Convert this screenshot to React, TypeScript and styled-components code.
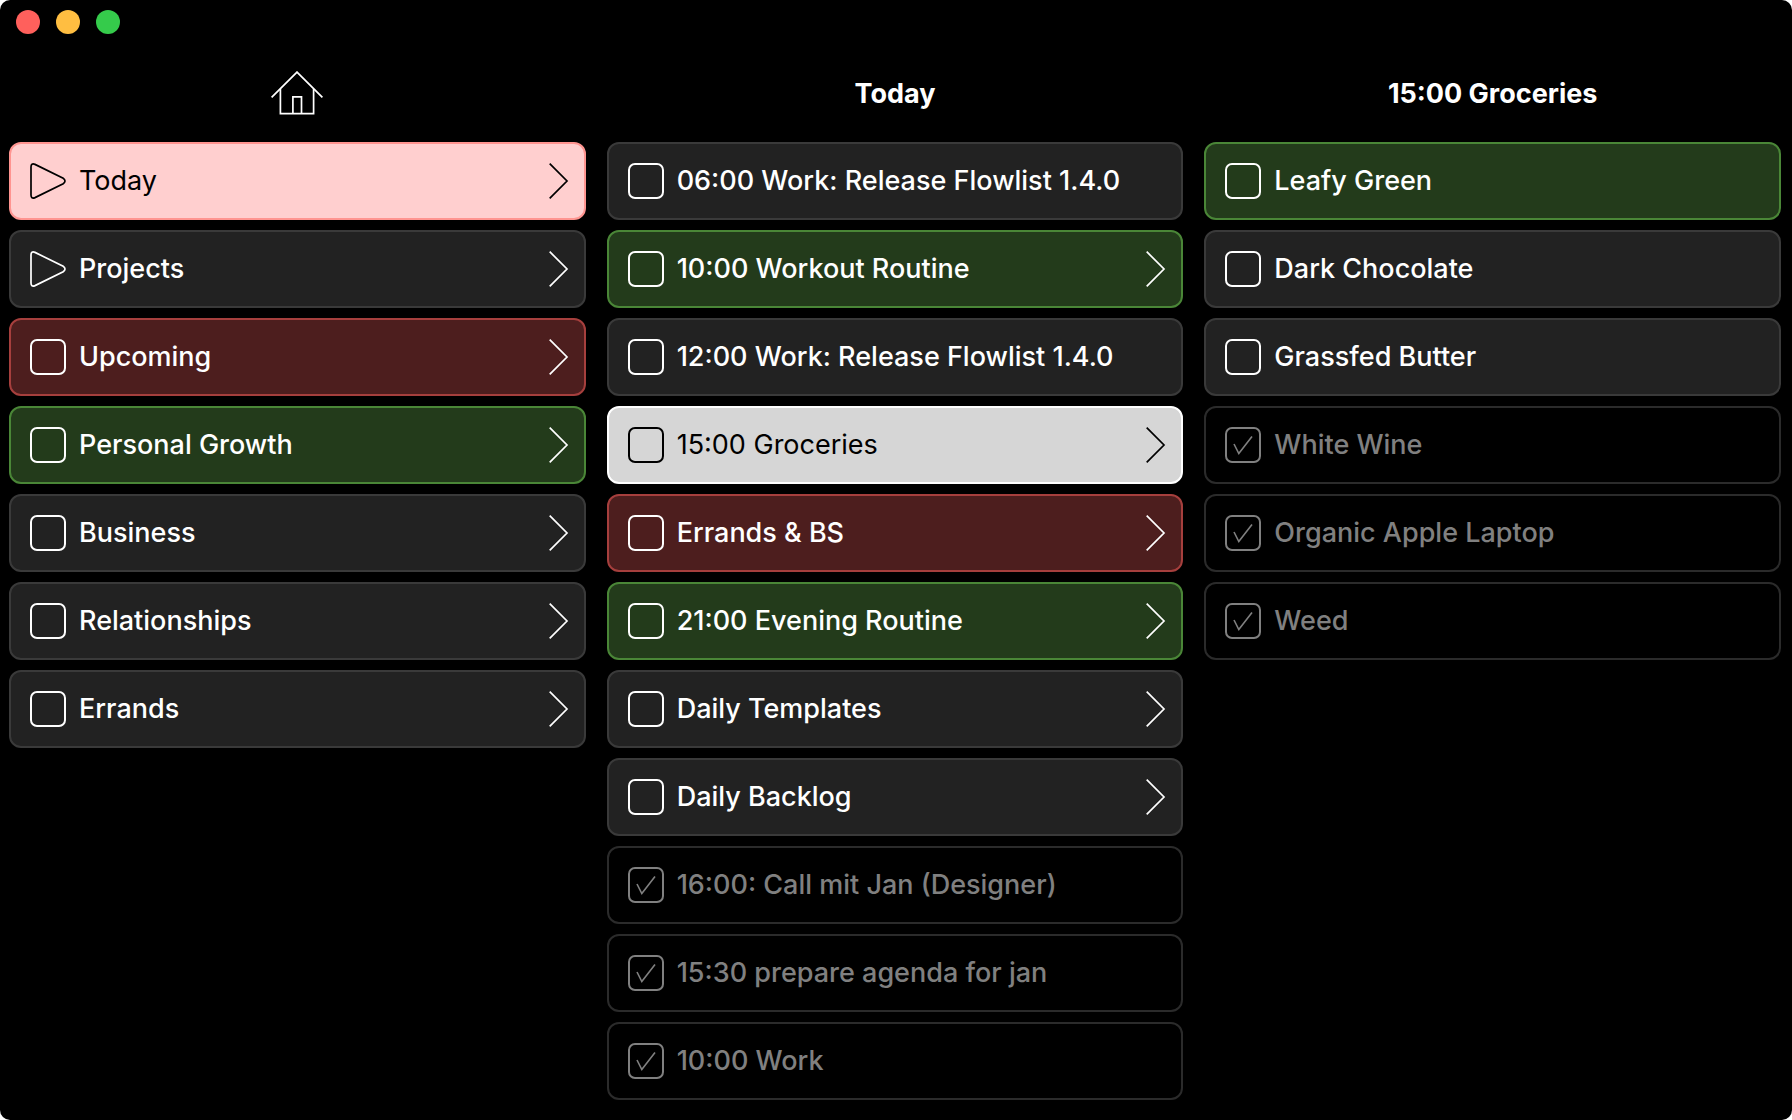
import React, { useId, useState } from "react";
import styled, { createGlobalStyle, css } from "styled-components";

type Tone = "plain" | "red" | "green" | "pinkActive" | "plainActive";

interface Item {
  title: string;
  tone?: Tone;
  flow?: boolean;
  open?: boolean;
  done?: boolean;
}

const tones: Record<Tone | "done", { bg: string; edge: string; ink: string; weight: number }> = {
  plain: { bg: "#222222", edge: "#3a3a3a", ink: "#ffffff", weight: 500 },
  red: { bg: "#4d1e1e", edge: "#a63f3d", ink: "#ffffff", weight: 500 },
  green: { bg: "#233b1b", edge: "#4a8637", ink: "#ffffff", weight: 500 },
  pinkActive: { bg: "#ffcfcf", edge: "#ff9490", ink: "#000000", weight: 400 },
  plainActive: { bg: "#d6d6d6", edge: "#ffffff", ink: "#000000", weight: 400 },
  done: { bg: "#000000", edge: "#2b2b2b", ink: "#808080", weight: 500 },
};

const home: Item[] = [
  { title: "Today", tone: "pinkActive", flow: true, open: true },
  { title: "Projects", flow: true, open: true },
  { title: "Upcoming", tone: "red", open: true },
  { title: "Personal Growth", tone: "green", open: true },
  { title: "Business", open: true },
  { title: "Relationships", open: true },
  { title: "Errands", open: true },
];

const today: Item[] = [
  { title: "06:00 Work: Release Flowlist 1.4.0" },
  { title: "10:00 Workout Routine", tone: "green", open: true },
  { title: "12:00 Work: Release Flowlist 1.4.0" },
  { title: "15:00 Groceries", tone: "plainActive", open: true },
  { title: "Errands & BS", tone: "red", open: true },
  { title: "21:00 Evening Routine", tone: "green", open: true },
  { title: "Daily Templates", open: true },
  { title: "Daily Backlog", open: true },
  { title: "16:00: Call mit Jan (Designer)", done: true },
  { title: "15:30 prepare agenda for jan", done: true },
  { title: "10:00 Work", done: true },
];

const groceries: Item[] = [
  { title: "Leafy Green", tone: "green" },
  { title: "Dark Chocolate" },
  { title: "Grassfed Butter" },
  { title: "White Wine", done: true },
  { title: "Organic Apple Laptop", done: true },
  { title: "Weed", done: true },
];

const GlobalStyle = createGlobalStyle`
  *, *::before, *::after { box-sizing: border-box; }
  body {
    margin: 0;
    background: #ffffff;
    font-family: Inter, "Liberation Sans", sans-serif;
  }
`;

const resetButton = css`
  display: flex;
  padding: 0;
  border: 0;
  background: none;
  color: inherit;
  cursor: pointer;
`;

const Window = styled.div`
  display: flex;
  flex-direction: column;
  min-height: 100vh;
  background: #000000;
  color: #ffffff;
  border-radius: 10px;
`;

const TitleBar = styled.div`
  display: flex;
  gap: 16px;
  height: 46px;
  padding: 10px 16px;
`;

const WindowButton = styled.button<{ $color: string }>`
  ${resetButton}
  width: 24px;
  height: 24px;
  border-radius: 50%;
  background: ${(p) => p.$color};
`;

const Columns = styled.main`
  display: grid;
  grid-template-columns: repeat(3, minmax(0, 1fr));
  gap: 21px;
  padding: 0 11px 20px 9px;
`;

const ColumnHeader = styled.header`
  display: flex;
  align-items: center;
  justify-content: center;
  height: 96px;
`;

const Heading = styled.h2`
  margin: 0;
  font-size: 27px;
  line-height: 36px;
  font-weight: 700;
`;

const HomeButton = styled.button`
  ${resetButton}
`;

const List = styled.ul`
  display: flex;
  flex-direction: column;
  gap: 10px;
  margin: 0;
  padding: 0;
  list-style: none;
`;

const Row = styled.li<{ $tone: Tone | "done" }>`
  display: flex;
  align-items: center;
  gap: 13px;
  min-height: 78px;
  padding: 0 15px 0 19px;
  border: 2px solid ${(p) => tones[p.$tone].edge};
  border-radius: 12px;
  background: ${(p) => tones[p.$tone].bg};
  color: ${(p) => tones[p.$tone].ink};
  font-weight: ${(p) => tones[p.$tone].weight};
`;

const Label = styled.label`
  flex: 1;
  min-width: 0;
  font-size: 27px;
  line-height: 36px;
  white-space: nowrap;
  overflow: hidden;
  text-overflow: ellipsis;
`;

const FlowButton = styled.button`
  ${resetButton}
`;

const OpenButton = styled.button`
  ${resetButton}
`;

const CheckWrap = styled.span`
  position: relative;
  display: flex;
`;

const Box = styled.input`
  appearance: none;
  width: 36px;
  height: 36px;
  margin: 0;
  border: 2px solid currentColor;
  border-radius: 7px;
  color: inherit;
`;

const Tick = styled.svg`
  position: absolute;
  inset: 0;
  pointer-events: none;
`;

function HomeIcon() {
  return (
    <svg width="52" height="46" viewBox="0 0 52 46" fill="none" stroke="currentColor" strokeWidth="1.7" aria-hidden="true">
      <path d="M.6 26.4 26 1.1l25.4 25.3" />
      <path d="M9.4 18v24.6h33.2V18M21.9 42.6V25.9h8.6v16.7" />
    </svg>
  );
}

function FlowIcon() {
  return (
    <svg width="36" height="36" viewBox="0 0 36 36" fill="none" stroke="currentColor" strokeWidth="1.7" aria-hidden="true">
      <path d="M1 4v28q0 4.2 4 2.6l28.2-13.9q3.6-2.7 0-5.4L5 1.4Q1-.2 1 4Z" />
    </svg>
  );
}

function ChevronIcon() {
  return (
    <svg width="20" height="36" viewBox="0 0 20 36" fill="none" stroke="currentColor" strokeWidth="1.7" aria-hidden="true">
      <path d="M.7.7 18 18 .7 35.3" />
    </svg>
  );
}

function ListRow({ item }: { item: Item }) {
  const id = useId();
  const [done, setDone] = useState(Boolean(item.done));
  return (
    <Row $tone={done ? "done" : item.tone ?? "plain"}>
      {item.flow ? (
        <FlowButton id={id} type="button">
          <FlowIcon />
        </FlowButton>
      ) : (
        <CheckWrap>
          <Box id={id} type="checkbox" checked={done} onChange={(e) => setDone(e.target.checked)} />
          {done && (
            <Tick width="36" height="36" viewBox="0 0 36 36" fill="none" stroke="currentColor" strokeWidth="1.6">
              <path d="m9 17 4.8 9.6L27 9.4" />
            </Tick>
          )}
        </CheckWrap>
      )}
      <Label htmlFor={id}>{item.title}</Label>
      {item.open && (
        <OpenButton type="button" aria-label={`Open ${item.title}`}>
          <ChevronIcon />
        </OpenButton>
      )}
    </Row>
  );
}

function Column({ header, items }: { header: React.ReactNode; items: Item[] }) {
  return (
    <section>
      <ColumnHeader>{header}</ColumnHeader>
      <List>
        {items.map((item) => (
          <ListRow key={item.title} item={item} />
        ))}
      </List>
    </section>
  );
}

export default function App() {
  return (
    <>
      <GlobalStyle />
      <Window>
        <TitleBar>
          <WindowButton type="button" aria-label="Close" $color="#ff605c" />
          <WindowButton type="button" aria-label="Minimize" $color="#ffbe41" />
          <WindowButton type="button" aria-label="Zoom" $color="#35cb4b" />
        </TitleBar>
        <Columns>
          <Column
            header={
              <HomeButton type="button" aria-label="Home">
                <HomeIcon />
              </HomeButton>
            }
            items={home}
          />
          <Column header={<Heading>Today</Heading>} items={today} />
          <Column header={<Heading>15:00 Groceries</Heading>} items={groceries} />
        </Columns>
      </Window>
    </>
  );
}
